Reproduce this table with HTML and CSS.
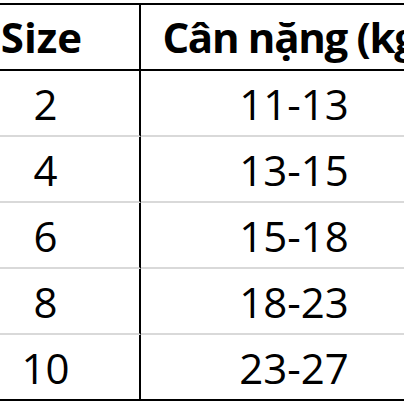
FILE: index.html
```html
<!DOCTYPE html>
<html lang="vi">
<head>
<meta charset="utf-8">
<link rel="stylesheet" href="styles.css">
</head>
<body>
<div class="frame">
  <div class="table">
    <div class="cell c1 head">Size</div>
    <div class="cell c2 head">Cân nặng (kg)</div>
    <div class="cell c1">2</div>
    <div class="cell c2">11-13</div>
    <div class="cell c1">4</div>
    <div class="cell c2">13-15</div>
    <div class="cell c1">6</div>
    <div class="cell c2">15-18</div>
    <div class="cell c1">8</div>
    <div class="cell c2">18-23</div>
    <div class="cell c1 last">10</div>
    <div class="cell c2 last">23-27</div>
  </div>
</div>
</body>
</html>
```
FILE: styles.css
```css
html, body {
  margin: 0;
  padding: 0;
  background: #fff;
}
.frame {
  width: 404px;
  height: 404px;
  overflow: hidden;
  padding-top: 3px;
  box-sizing: border-box;
}
.table {
  display: grid;
  grid-template-columns: 141px 304px;
  grid-template-rows: 66px repeat(5, 66px);
  border-top: 2px solid #000;
  font-family: "Open Sans", "Noto Sans", sans-serif;
  font-size: 42px;
  font-weight: 500;
  color: #000;
}
.cell {
  display: flex;
  align-items: center;
  justify-content: center;
  border-bottom: 2px solid #d9d9d9;
  box-sizing: border-box;
  white-space: nowrap;
  line-height: 1;
  padding-top: 2px;
}
.c1 {
  border-right: 2px solid #000;
  padding-right: 48px;
}
.c2 {
  padding-left: 2px;
}
.head {
  font-weight: 700;
  font-size: 42px;
  border-bottom-color: #000;
  height: 66px;
  padding-top: 0;
}
.c1.head {
  padding-right: 56px;
}
.c2.head {
  padding-left: 6px;
  letter-spacing: -1.3px;
}
.last {
  border-bottom-color: #000;
}
```
